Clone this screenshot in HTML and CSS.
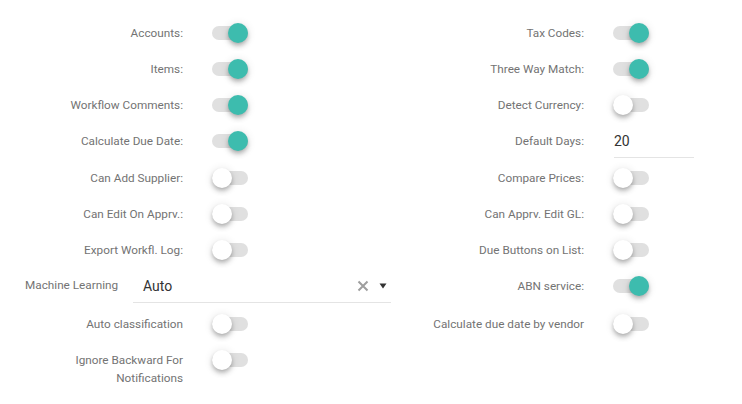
FILE: index.html
```html
<!DOCTYPE html>
<html lang="en">
<head>
    <meta charset="UTF-8">
    <meta name="viewport" content="width=device-width, initial-scale=1.0">
    <title>Settings</title>
    <link rel="stylesheet" href="styles.css">
</head>
<body>
    <div class="settings">
        <!-- row 1 -->
        <div class="field">
            <div class="label">Accounts:</div>
            <div class="switch on"><span class="track"></span><span class="thumb"></span></div>
        </div>
        <div class="field">
            <div class="label">Tax Codes:</div>
            <div class="switch on"><span class="track"></span><span class="thumb"></span></div>
        </div>

        <!-- row 2 -->
        <div class="field">
            <div class="label">Items:</div>
            <div class="switch on"><span class="track"></span><span class="thumb"></span></div>
        </div>
        <div class="field">
            <div class="label">Three Way Match:</div>
            <div class="switch on"><span class="track"></span><span class="thumb"></span></div>
        </div>

        <!-- row 3 -->
        <div class="field">
            <div class="label">Workflow Comments:</div>
            <div class="switch on"><span class="track"></span><span class="thumb"></span></div>
        </div>
        <div class="field">
            <div class="label">Detect Currency:</div>
            <div class="switch"><span class="track"></span><span class="thumb"></span></div>
        </div>

        <!-- row 4 -->
        <div class="field">
            <div class="label">Calculate Due Date:</div>
            <div class="switch on"><span class="track"></span><span class="thumb"></span></div>
        </div>
        <div class="field">
            <div class="label">Default Days:</div>
            <div class="text-input">20</div>
        </div>

        <!-- row 5 -->
        <div class="field">
            <div class="label">Can Add Supplier:</div>
            <div class="switch"><span class="track"></span><span class="thumb"></span></div>
        </div>
        <div class="field">
            <div class="label">Compare Prices:</div>
            <div class="switch"><span class="track"></span><span class="thumb"></span></div>
        </div>

        <!-- row 6 -->
        <div class="field">
            <div class="label">Can Edit On Apprv.:</div>
            <div class="switch"><span class="track"></span><span class="thumb"></span></div>
        </div>
        <div class="field">
            <div class="label">Can Apprv. Edit GL:</div>
            <div class="switch"><span class="track"></span><span class="thumb"></span></div>
        </div>

        <!-- row 7 -->
        <div class="field">
            <div class="label">Export Workfl. Log:</div>
            <div class="switch"><span class="track"></span><span class="thumb"></span></div>
        </div>
        <div class="field">
            <div class="label">Due Buttons on List:</div>
            <div class="switch"><span class="track"></span><span class="thumb"></span></div>
        </div>

        <!-- row 8 -->
        <div class="field field-wide">
            <div class="label">Machine Learning</div>
            <div class="select">
                <span class="select-value">Auto</span>
                <svg class="select-clear" width="12" height="12" viewBox="0 0 12 12">
                    <path d="M1.5 1.5 L10.5 10.5 M10.5 1.5 L1.5 10.5" stroke="#9e9e9e" stroke-width="2" fill="none"/>
                </svg>
                <svg class="select-arrow" width="8" height="6" viewBox="0 0 8 6">
                    <path d="M0.5 0.5 L7.5 0.5 L4 5.5 Z" fill="#333"/>
                </svg>
            </div>
        </div>
        <div class="field">
            <div class="label">ABN service:</div>
            <div class="switch on"><span class="track"></span><span class="thumb"></span></div>
        </div>

        <!-- row 9 -->
        <div class="field">
            <div class="label">Auto classification</div>
            <div class="switch"><span class="track"></span><span class="thumb"></span></div>
        </div>
        <div class="field">
            <div class="label">Calculate due date by vendor</div>
            <div class="switch"><span class="track"></span><span class="thumb"></span></div>
        </div>

        <!-- row 10 -->
        <div class="field">
            <div class="label">Ignore Backward For Notifications</div>
            <div class="switch"><span class="track"></span><span class="thumb"></span></div>
        </div>
        <div class="field"></div>
    </div>
</body>
</html>
```

FILE: styles.css
```css
body {
    margin: 0;
    background-color: #fff;
    font-family: Roboto, "Noto Sans", Arial, sans-serif;
    color: #333;
}

.settings {
    display: grid;
    grid-template-columns: 401px 1fr;
    grid-template-rows: 36px 36px 36px 37px 36px 36px 36px 38px 36px auto;
    padding-top: 15px;
}

.field {
    display: flex;
    align-items: flex-start;
}

.label {
    box-sizing: border-box;
    width: 183px;
    padding: 9px 0 9px 20px;
    font-size: 11.75px;
    line-height: 18px;
    color: #737373;
    text-align: right;
}

/* switch */
.switch {
    position: relative;
    width: 36px;
    height: 20px;
    margin-top: 8px;
    margin-left: 29px;
}

.switch .track {
    position: absolute;
    left: 0;
    top: 3px;
    width: 36px;
    height: 14px;
    border-radius: 7px;
    background-color: #e0e0e0;
}

.switch .thumb {
    position: absolute;
    left: 0;
    top: 0;
    width: 20px;
    height: 20px;
    border-radius: 50%;
    background-color: #fff;
    box-shadow: 0 2px 4px -1px rgba(0, 0, 0, 0.2), 0 4px 5px 0 rgba(0, 0, 0, 0.14), 0 1px 10px 0 rgba(0, 0, 0, 0.12);
}

.switch.on .thumb {
    left: 16px;
    background-color: #3dbcae;
}

/* text field */
.text-input {
    box-sizing: border-box;
    width: 80px;
    height: 35px;
    margin-left: 30px;
    padding-top: 9px;
    font-size: 14px;
    line-height: 18px;
    color: #333;
    border-bottom: 1px solid #e4e4e4;
}

/* select */
.field-wide .label {
    width: 133px;
    padding: 8px 0 8px 25px;
    text-align: left;
}

.select {
    box-sizing: border-box;
    display: flex;
    align-items: center;
    width: 258px;
    height: 35px;
    padding: 1px 4px 0 10px;
    border-bottom: 1px solid #e4e4e4;
}

.select-value {
    flex: 1;
    font-size: 14px;
    color: #333;
}

.select-clear {
    margin-right: 10px;
}
```
